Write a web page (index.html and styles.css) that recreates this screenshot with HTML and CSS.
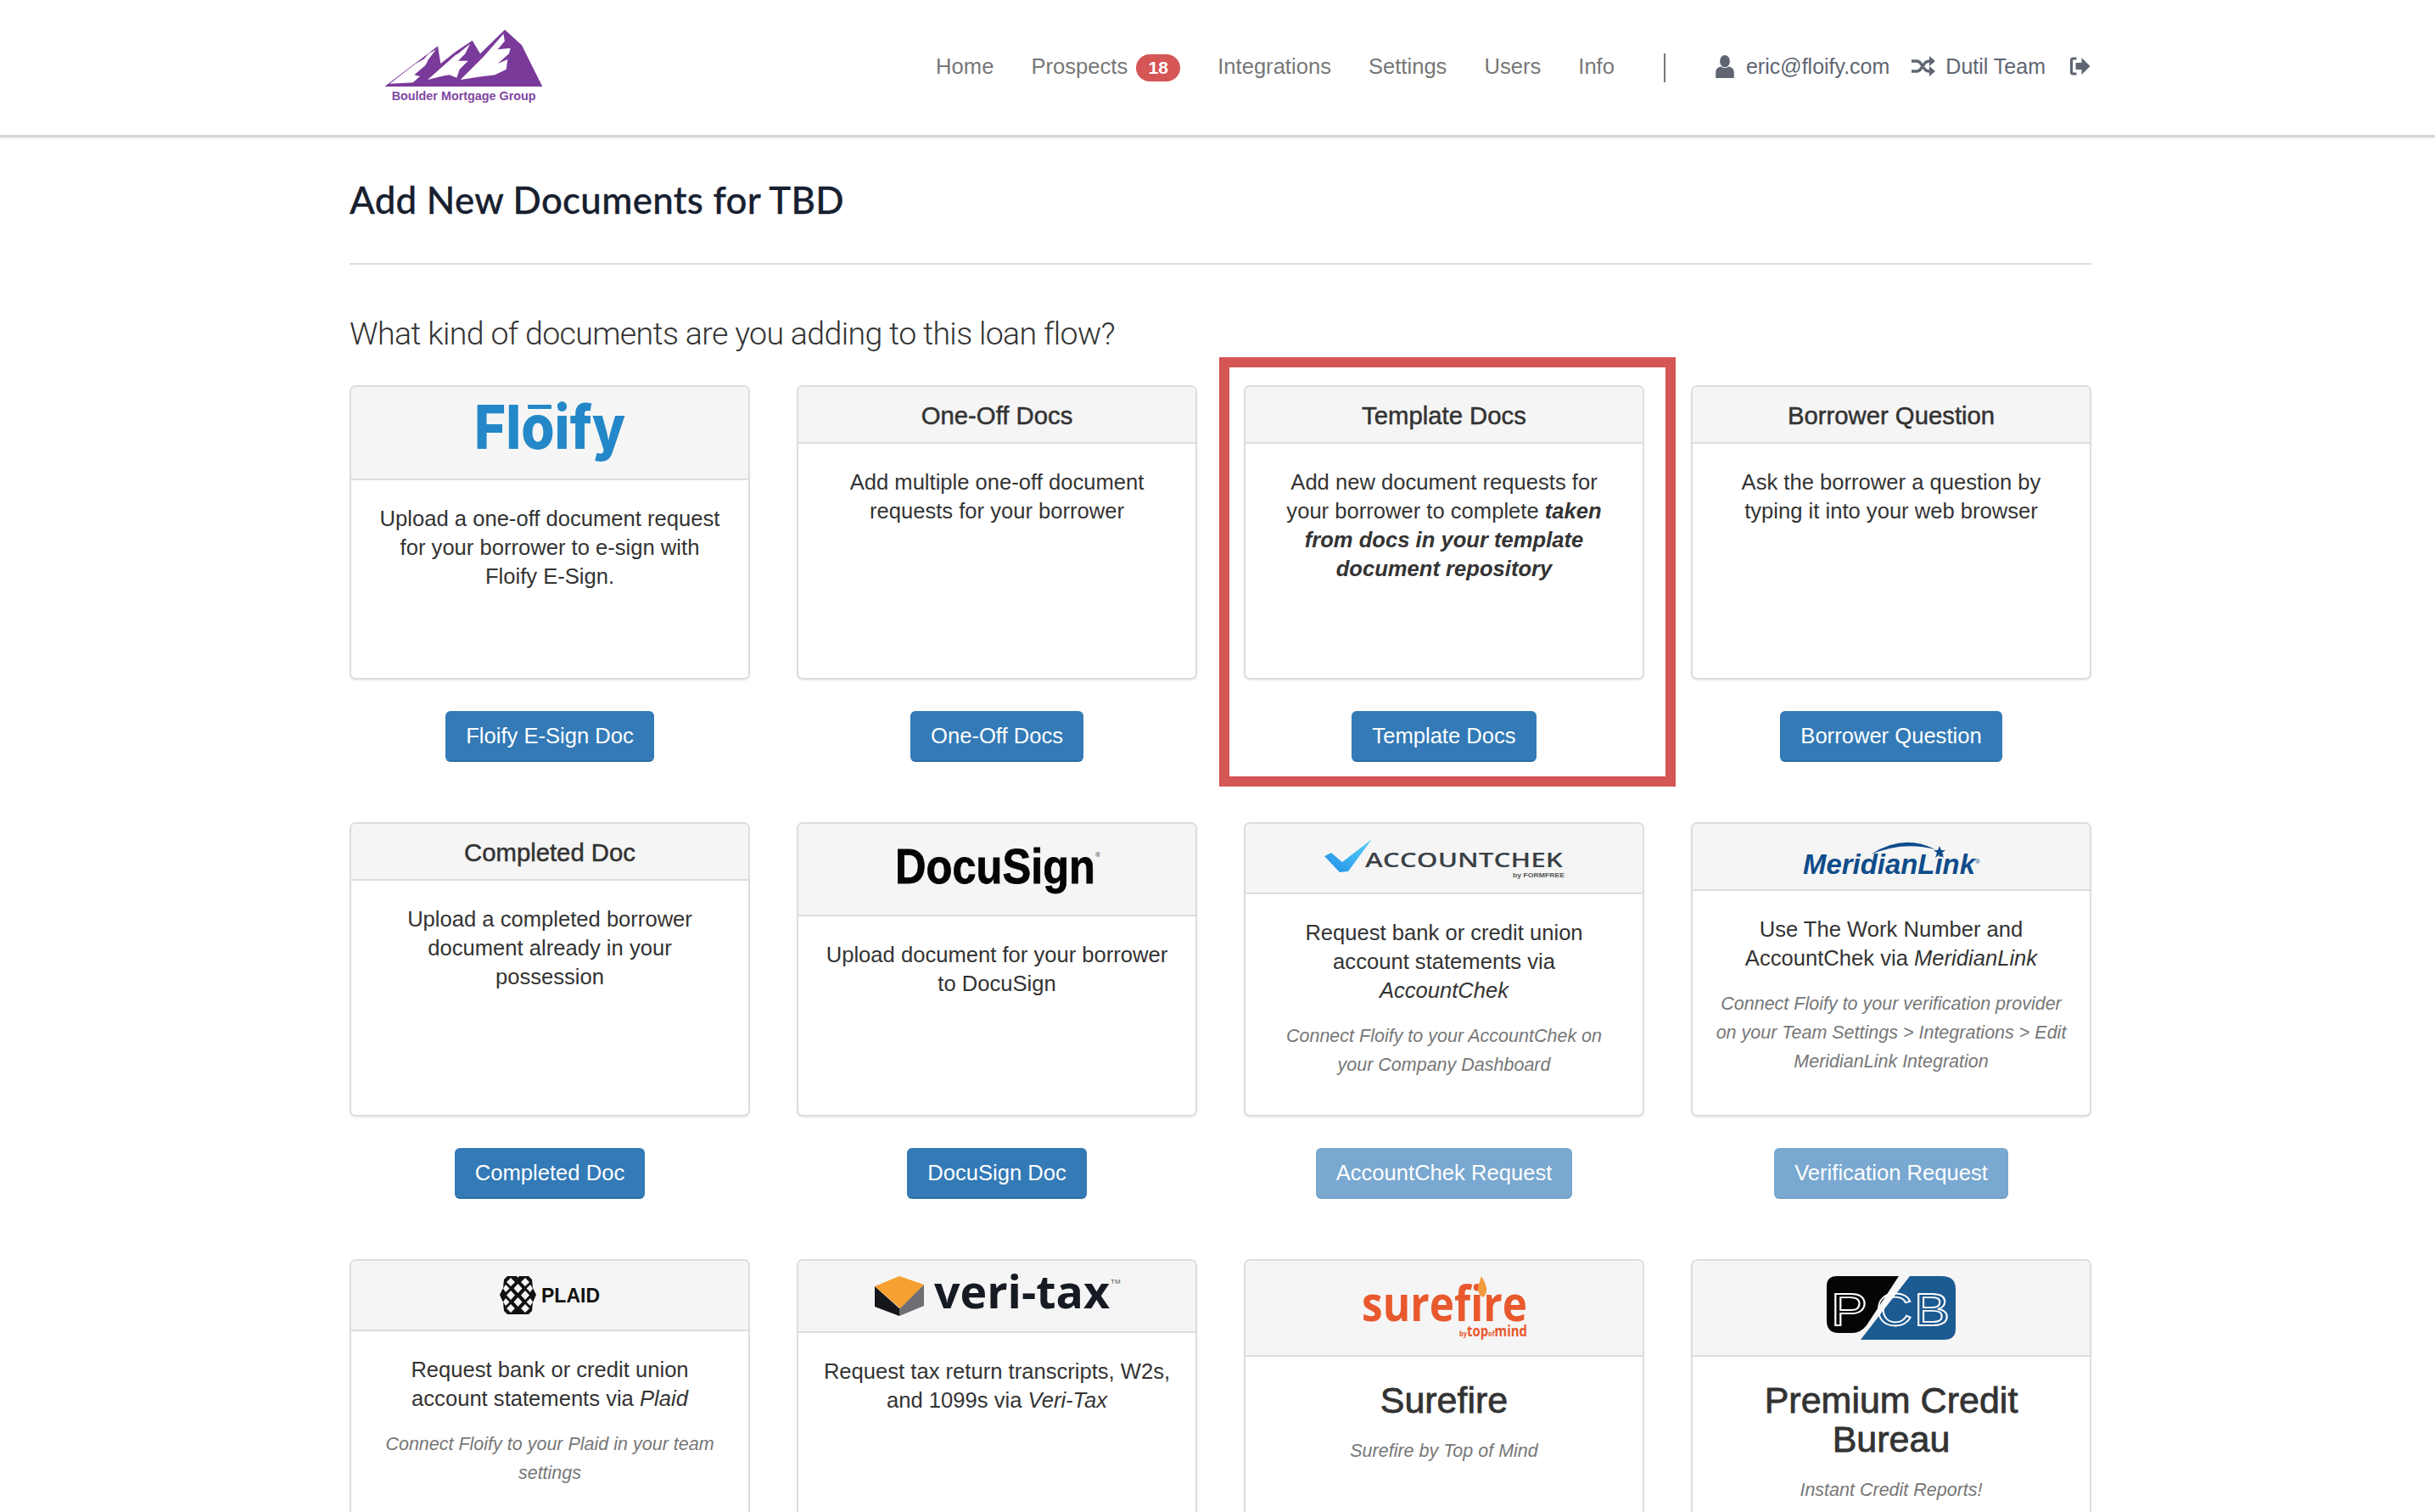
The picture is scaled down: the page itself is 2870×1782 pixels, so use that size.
FILE: index.html
```html
<!DOCTYPE html>
<html lang="en">

<head>
  <meta charset="UTF-8">
  <title>Add New Documents</title>
  <link rel="stylesheet" href="styles.css">
</head>

<body>
  <header class="topbar">
    <div class="topbar-inner">
      <svg class="brand" viewBox="0 0 690 330" aria-label="Boulder Mortgage Group">
        <path fill="#7a3a9a" d="M70 246 L258 103 L268 165 L322 122 L380 83 L408 130 L495 45 L555 100 L590 170 L628 246 Z" />
        <path fill="#fff" d="M88 236 L180 165 L210 148 L225 130 L252 115 L225 150 L215 170 L175 205 L195 210 L170 232 Z" />
        <path fill="#fff" d="M222 222 L320 135 L330 130 L372 95 L355 130 L330 155 L365 155 L335 185 L325 215 L300 205 L280 208 Z" />
        <path fill="#fff" d="M338 222 L420 140 L490 60 L495 85 L470 115 L515 110 L510 130 L470 165 L505 150 L500 185 L460 205 L400 212 Z" />
        <text x="95" y="293" class="brand-text" textLength="510" lengthAdjust="spacingAndGlyphs">Boulder Mortgage Group</text>
      </svg>

      <nav class="nav">
        <a class="nav-link">Home</a>
        <a class="nav-link">Prospects<span class="badge">18</span></a>
        <a class="nav-link">Integrations</a>
        <a class="nav-link">Settings</a>
        <a class="nav-link">Users</a>
        <a class="nav-link">Info</a>
        <span class="nav-divider"></span>
        <a class="nav-user">
          <svg class="nav-icon-user" viewBox="0 0 24 30">
            <ellipse cx="12" cy="8" rx="6.5" ry="8" fill="#5f6672" />
            <path fill="#5f6672" d="M0 30 V23 Q0 16 7 15 Q12 19 17 15 Q24 16 24 23 V30 Z" />
          </svg>
          eric@floify.com
        </a>
        <a class="nav-user nav-team">
          <svg class="nav-icon-shuffle" viewBox="0 0 28 24">
            <path fill="none" stroke="#5f6672" stroke-width="3.4" d="M0 6 H6 Q9 6 11 9 L16 16 Q18 18 21 18 H24 M0 18 H6 Q9 18 11 15 L16 8 Q18 6 21 6 H24" />
            <path fill="#5f6672" d="M21 0 L28 6 L21 12 Z M21 12 L28 18 L21 24 Z" />
          </svg>
          Dutil Team
        </a>
        <svg class="nav-icon-out" viewBox="0 0 24 24">
          <path fill="none" stroke="#5f6672" stroke-width="3.2" d="M8 3 H4 Q2 3 2 5 V19 Q2 21 4 21 H8" />
          <path fill="#5f6672" d="M7 8 H14 V2 L24 12 L14 22 V16 H7 Z" />
        </svg>
      </nav>
    </div>
  </header>

  <main class="page">
    <h1 class="page-title">Add New Documents for TBD</h1>
    <hr class="page-rule">
    <h2 class="page-question">What kind of documents are you adding to this loan flow?</h2>

    <div class="doc-grid">

      <div class="doc-col">
        <div class="card">
          <div class="card-head">
            <svg class="logo" width="178" height="72" viewBox="0 0 178 72">
              <text x="0" y="55" class="logo-floify" textLength="178" lengthAdjust="spacingAndGlyphs">Floify</text>
              <rect x="63" y="3" width="28" height="5" rx="1" fill="#2488c8" />
            </svg>
          </div>
          <div class="card-body">
            <p>Upload a one-off document request for your borrower to e-sign with Floify E-Sign.</p>
          </div>
        </div>
        <a class="btn">Floify E-Sign Doc</a>
      </div>

      <div class="doc-col">
        <div class="card">
          <div class="card-head card-head-title">One-Off Docs</div>
          <div class="card-body">
            <p>Add multiple one-off document requests for your borrower</p>
          </div>
        </div>
        <a class="btn">One-Off Docs</a>
      </div>

      <div class="doc-col">
        <div class="card">
          <div class="card-head card-head-title">Template Docs</div>
          <div class="card-body">
            <p>Add new document requests for your borrower to complete <b><i>taken from docs in your template document repository</i></b></p>
          </div>
        </div>
        <a class="btn">Template Docs</a>
        <div class="callout"></div>
      </div>

      <div class="doc-col">
        <div class="card">
          <div class="card-head card-head-title">Borrower Question</div>
          <div class="card-body">
            <p>Ask the borrower a question by typing it into your web browser</p>
          </div>
        </div>
        <a class="btn">Borrower Question</a>
      </div>

      <div class="doc-col">
        <div class="card">
          <div class="card-head card-head-title">Completed Doc</div>
          <div class="card-body">
            <p>Upload a completed borrower document already in your possession</p>
          </div>
        </div>
        <a class="btn">Completed Doc</a>
      </div>

      <div class="doc-col">
        <div class="card">
          <div class="card-head">
            <svg class="logo" width="241" height="71" viewBox="0 0 241 71">
              <text x="0" y="52" class="logo-docusign" textLength="236" lengthAdjust="spacingAndGlyphs">DocuSign</text>
              <text x="236" y="21" class="logo-docusign-r">®</text>
            </svg>
          </div>
          <div class="card-body">
            <p>Upload document for your borrower to DocuSign</p>
          </div>
        </div>
        <a class="btn">DocuSign Doc</a>
      </div>

      <div class="doc-col">
        <div class="card">
          <div class="card-head">
            <svg class="logo" width="283" height="45" viewBox="0 0 283 45">
              <defs>
                <linearGradient id="chek" x1="0" y1="1" x2="1" y2="0">
                  <stop offset="0" stop-color="#1f8fe6" />
                  <stop offset="1" stop-color="#5ed2fb" />
                </linearGradient>
              </defs>
              <path fill="url(#chek)" d="M0 20 L8 16 L21 27 L56 0 L28 38 L18 39 Z" />
              <text x="48" y="33" class="logo-chek" textLength="233" lengthAdjust="spacingAndGlyphs">ACCOUNTCHEK</text>
              <text x="222" y="45" class="logo-chek-by" textLength="61" lengthAdjust="spacingAndGlyphs">by FORMFREE</text>
            </svg>
          </div>
          <div class="card-body">
            <p>Request bank or credit union account statements via <i>AccountChek</i></p>
            <p class="muted">Connect Floify to your AccountChek on your Company Dashboard</p>
          </div>
        </div>
        <a class="btn btn-disabled">AccountChek Request</a>
      </div>

      <div class="doc-col">
        <div class="card">
          <div class="card-head">
            <svg class="logo" width="209" height="41" viewBox="0 0 209 41">
              <path fill="#0f4c8a" d="M80 18 Q118 -7 156 12 Q118 2 80 18 Z" />
              <path fill="#0f4c8a" d="M161 8 L163 13 L168 13 L164 16 L166 22 L161 18 L156 22 L158 16 L154 13 L159 13 Z" />
              <text x="0" y="41" class="logo-meridian" textLength="203" lengthAdjust="spacingAndGlyphs">MeridianLink</text>
              <text x="203" y="29" class="logo-meridian-r">®</text>
            </svg>
          </div>
          <div class="card-body">
            <p>Use The Work Number and AccountChek via <i>MeridianLink</i></p>
            <p class="muted">Connect Floify to your verification provider on your Team Settings &gt; Integrations &gt; Edit MeridianLink Integration</p>
          </div>
        </div>
        <a class="btn btn-disabled">Verification Request</a>
      </div>

      <div class="doc-col">
        <div class="card">
          <div class="card-head">
            <svg class="logo" width="118" height="45" viewBox="0 0 118 45">
              <path fill="#111" d="M9 0 H20 L21.5 2 L23 0 H34 L38 4 L39 14 L43 22 L39 31 L38 41 L34 45 H9 L5 41 L4 31 L0 22 L4 14 L5 4 Z" />
              <g fill="#f5f5f5">
                <path d="M13 2 L18 7 L13 12 L8 7 Z M30 2 L35 7 L30 12 L25 7 Z" />
                <path d="M21.5 9 L26.5 14.5 L21.5 20 L16.5 14.5 Z M7 10 L11.5 14.5 L7 19 L4 14.5 Z M36 10 L39 14.5 L36 19 L31.5 14.5 Z" />
                <path d="M13 17 L18 22.5 L13 28 L8 22.5 Z M30 17 L35 22.5 L30 28 L25 22.5 Z" />
                <path d="M21.5 25 L26.5 30.5 L21.5 36 L16.5 30.5 Z M7 26 L11.5 30.5 L7 35 L4 30.5 Z M36 26 L39 30.5 L36 35 L31.5 30.5 Z" />
                <path d="M13 33 L18 38 L13 43 L8 38 Z M30 33 L35 38 L30 43 L25 38 Z" />
              </g>
              <text x="49" y="31" class="logo-plaid" textLength="69" lengthAdjust="spacingAndGlyphs">PLAID</text>
            </svg>
          </div>
          <div class="card-body">
            <p>Request bank or credit union account statements via <i>Plaid</i></p>
            <p class="muted">Connect Floify to your Plaid in your team settings</p>
          </div>
        </div>
      </div>

      <div class="doc-col">
        <div class="card">
          <div class="card-head">
            <svg class="logo" width="288" height="47" viewBox="0 0 288 47">
              <path fill="#15171c" d="M0 12 L29 38 V47 L0 36 Z" />
              <path fill="#6d6f73" d="M58 10 L29 38 V47 L58 35 Z" />
              <path fill="#f5a030" d="M0 12 L29 0 L58 10 L30 38 Z" />
              <text x="70" y="38" class="logo-veritax" textLength="207" lengthAdjust="spacingAndGlyphs">veri-tax</text>
              <text x="278" y="9" class="logo-veritax-tm">TM</text>
            </svg>
          </div>
          <div class="card-body">
            <p>Request tax return transcripts, W2s, and 1099s via <i>Veri-Tax</i></p>
          </div>
        </div>
      </div>

      <div class="doc-col">
        <div class="card">
          <div class="card-head">
            <svg class="logo" width="195" height="75" viewBox="0 0 195 75">
              <text x="0" y="53" class="logo-surefire" textLength="195" lengthAdjust="spacingAndGlyphs">surefire</text>
              <path fill="#f39a3d" d="M141 0 Q146 8 147 14 Q148 21 143 25 Q137 22 137 15 Q138 8 141 0 Z" />
              <text x="115" y="71" class="logo-surefire-by" textLength="80" lengthAdjust="spacingAndGlyphs"><tspan font-size="9">by</tspan>top<tspan font-size="9">of</tspan>mind</text>
            </svg>
          </div>
          <div class="card-body">
            <h3 class="card-name">Surefire</h3>
            <p class="muted">Surefire by Top of Mind</p>
          </div>
        </div>
      </div>

      <div class="doc-col">
        <div class="card">
          <div class="card-head">
            <svg class="logo" width="152" height="75" viewBox="0 0 152 75">
              <path fill="#050505" d="M12 0 H85 L47 58 Q40 67 30 67 H14 Q0 67 0 52 V12 Q0 0 12 0 Z" />
              <path fill="#1c5a92" d="M98 0 H135 Q152 0 152 15 V62 Q152 75 138 75 H40 Z" />
              <text x="5" y="58" class="logo-pcb" textLength="43" lengthAdjust="spacingAndGlyphs">P</text>
              <text x="58" y="58" class="logo-pcb" textLength="43" lengthAdjust="spacingAndGlyphs">C</text>
              <text x="103" y="58" class="logo-pcb" textLength="42" lengthAdjust="spacingAndGlyphs">B</text>
            </svg>
          </div>
          <div class="card-body">
            <h3 class="card-name">Premium Credit Bureau</h3>
            <p class="muted">Instant Credit Reports!</p>
          </div>
        </div>
      </div>

    </div>
  </main>
</body>

</html>
```

FILE: styles.css
```css
* {
  box-sizing: border-box;
}

html,
body {
  height: 1782px;
  overflow: hidden;
}

body {
  margin: 0;
  background: #fff;
  color: #333;
  font-family: "Liberation Sans", Arial, sans-serif;
  font-size: 25.6px;
  line-height: 34px;
}

/* top bar */
.topbar {
  height: 162px;
  border-bottom: 3px solid #d6d6d6;
  box-shadow: 0 1px 2px rgba(0, 0, 0, .08);
}

.topbar-inner {
  width: 2052px;
  height: 159px;
  margin-left: 412px;
  display: flex;
  justify-content: space-between;
  align-items: center;
}

.brand {
  width: 230px;
  height: 110px;
  margin: 0 0 10px 18px;
}

.brand-text {
  font-family: "Liberation Sans", sans-serif;
  font-weight: 700;
  font-size: 42px;
  fill: #7f46a3;
}

.nav {
  display: flex;
  align-items: center;
  font-size: 25px;
}

.nav-link {
  display: flex;
  align-items: center;
  margin: 0 44px 4px 0;
  color: #777;
  font-size: 25.6px;
}

.badge {
  position: relative;
  top: 2px;
  width: 52px;
  height: 32px;
  margin-left: 10px;
  border-radius: 16px;
  background: #d65555;
  color: #fff;
  font-size: 21px;
  font-weight: 700;
  line-height: 32px;
  text-align: center;
}

.nav-divider {
  width: 2px;
  height: 34px;
  margin: 0 58px 0 14px;
  background: #777;
}

.nav-user {
  display: flex;
  align-items: center;
  margin-bottom: 3px;
  color: #5f6672;
}

.nav-team {
  margin-left: 26px;
}

.nav-icon-user {
  width: 24px;
  height: 27px;
  margin-right: 13px;
}

.nav-icon-shuffle {
  width: 28px;
  height: 24px;
  margin-right: 12px;
}

.nav-icon-out {
  width: 25px;
  height: 24px;
  margin: 0 0 3px 28px;
}

/* page */
.page {
  width: 2053px;
  margin-left: 412px;
}

.page-title {
  margin: 46px 0 0;
  color: #17202f;
  font-family: Lato, sans-serif;
  font-size: 43.8px;
  font-weight: 500;
  letter-spacing: .3px;
  line-height: 54px;
  -webkit-text-stroke: .3px #17202f;
}

.page-rule {
  margin: 48px 0 0;
  border: 0;
  border-top: 2px solid #ddd;
}

.page-question {
  margin: 58px 0 0;
  color: #333;
  font-family: Roboto, sans-serif;
  font-size: 37.5px;
  font-weight: 300;
  letter-spacing: -.65px;
  line-height: 46px;
}

.doc-grid {
  display: grid;
  grid-template-columns: repeat(4, 472px);
  column-gap: 55px;
  row-gap: 71px;
  margin-top: 38px;
}

.doc-col {
  position: relative;
  display: flex;
  flex-direction: column;
  align-items: center;
}

/* cards */
.card {
  width: 100%;
  height: 347px;
  border: 2px solid #ddd;
  border-radius: 7px;
  box-shadow: 0 2px 2px rgba(0, 0, 0, .05);
  overflow: hidden;
}

.card-head {
  padding: 18px 10px;
  background: #f5f5f5;
  border-bottom: 2px solid #ddd;
}

.card-head-title {
  padding: 19px 10px 17px;
  font-size: 29.3px;
  line-height: 29px;
  text-align: center;
  color: #333;
  -webkit-text-stroke: .5px #333;
}

.logo {
  display: block;
  margin: 0 auto;
  overflow: visible;
}

.card-body {
  padding: 28px 26px;
  text-align: center;
}

.card-body p {
  margin: 0 0 20px;
}

.card-body .muted {
  color: #777;
  font-size: 21.5px;
  font-style: italic;
}

.card-name {
  margin: 0 0 20px;
  font-size: 43px;
  font-weight: 400;
  line-height: 46px;
  -webkit-text-stroke: .8px #333;
}

/* buttons */
.btn {
  margin-top: 37px;
  height: 60px;
  padding: 0 22px;
  border: 2px solid #2e6da4;
  border-top-color: #337ab7;
  border-left-color: #337ab7;
  border-right-color: #337ab7;
  border-radius: 6px;
  background: #337ab7;
  color: #fff;
  line-height: 54px;
}

.btn-disabled {
  opacity: .65;
}

/* red box drawn over the template column */
.callout {
  position: absolute;
  top: -33px;
  left: -29px;
  right: -37px;
  bottom: -29px;
  border: 12px solid #d65555;
}

/* logo text */
.logo-floify {
  font-family: Inter, sans-serif;
  font-weight: 800;
  font-size: 72px;
  fill: #2488c8;
}

.logo-docusign {
  font-family: "Liberation Sans", sans-serif;
  font-weight: 700;
  font-size: 57px;
  fill: #050505;
  stroke: #050505;
  stroke-width: .8;
}

.logo-docusign-r {
  font-size: 8px;
  fill: #333;
}

.logo-chek {
  font-family: "Open Sans", sans-serif;
  font-weight: 600;
  font-size: 23px;
  fill: #3b4046;
}

.logo-chek-by {
  font-family: "Liberation Sans", sans-serif;
  font-weight: 700;
  font-size: 8px;
  fill: #555;
}

.logo-meridian {
  font-family: "Liberation Sans", sans-serif;
  font-weight: 700;
  font-style: italic;
  font-size: 34px;
  fill: #0f4c8a;
}

.logo-meridian-r {
  font-size: 8px;
  fill: #0f4c8a;
}

.logo-plaid {
  font-family: "Liberation Sans", sans-serif;
  font-weight: 700;
  font-size: 23px;
  fill: #111;
}

.logo-veritax {
  font-family: "Open Sans", sans-serif;
  font-weight: 700;
  font-size: 54px;
  fill: #161a22;
}

.logo-veritax-tm {
  font-size: 8px;
  fill: #555;
}

.logo-surefire {
  font-family: "Open Sans", sans-serif;
  font-weight: 700;
  font-size: 58px;
  fill: #e8592d;
}

.logo-surefire-by {
  font-family: "Open Sans", sans-serif;
  font-weight: 700;
  font-size: 18px;
  fill: #e8592d;
}

.logo-pcb {
  font-family: "Liberation Sans", sans-serif;
  font-size: 54px;
  fill: none;
  stroke: #fff;
  stroke-width: 1.8;
}
```
